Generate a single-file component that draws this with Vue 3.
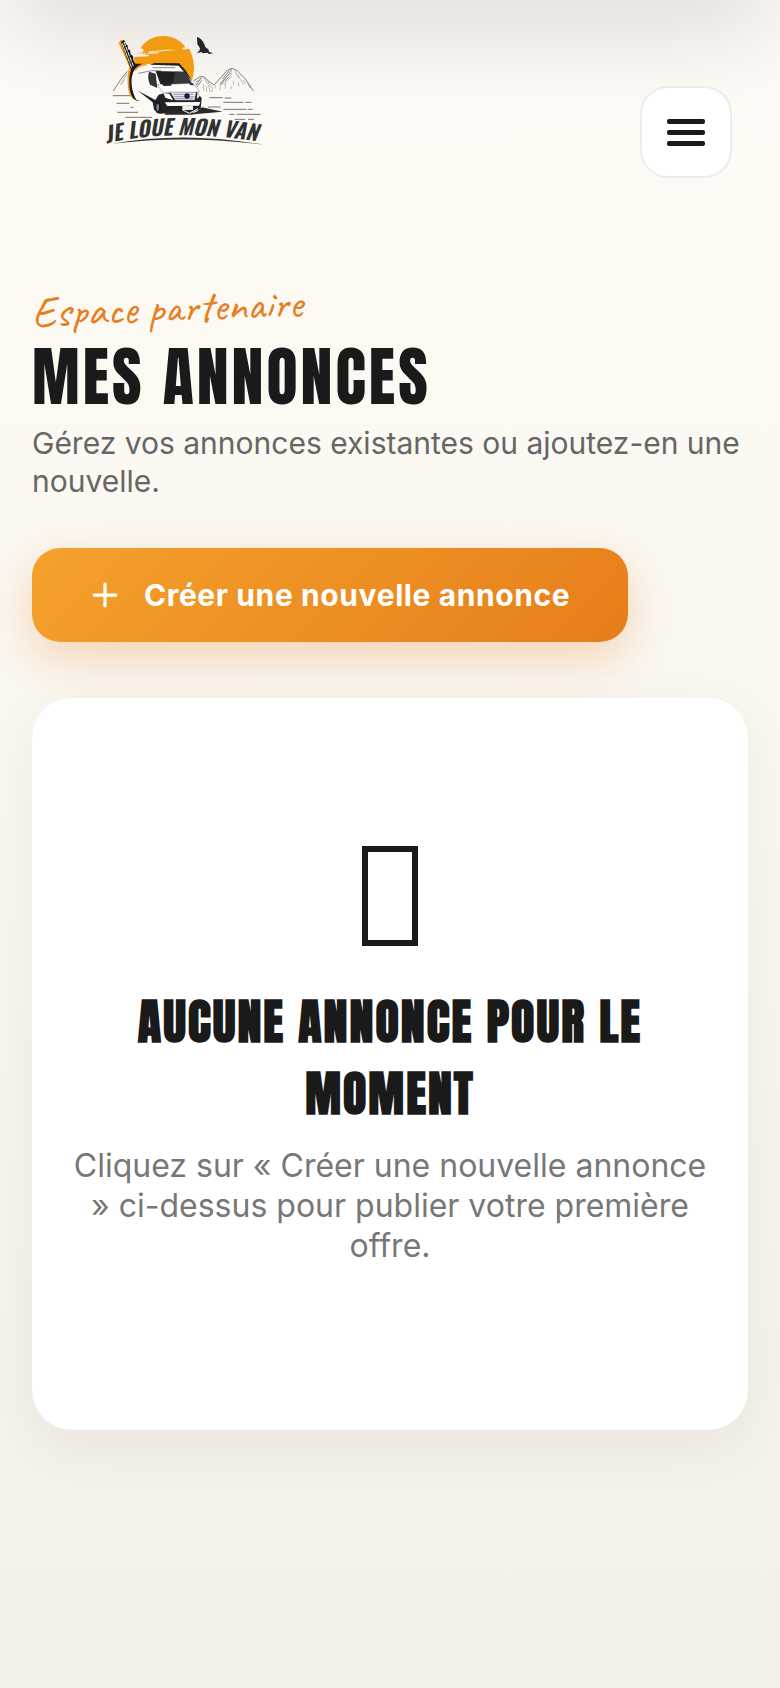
<script setup>
import { ref } from 'vue'

const menuOpen = ref(false)
const annonces = ref([])
</script>

<template>
  <div class="page">
    <header class="site-header">
      <a href="#" class="logo" aria-label="Je loue mon van">
        <svg viewBox="0 0 570 420" class="logo-svg">
          <!-- soleil -->
          <path fill="#f39c12" d="M152 85C164 62 190 48 220 48c28 0 52 12 66 34l-10 3 4 5c-30 0-50-3-78 2l-22 2-12 9-3-8-6 6 1-14z" />
          <path fill="#f39c12" d="M170 98c40-6 80-6 128-12 10 22 15 42 14 60-1 17-4 31-9 43l-28-52-80-5-60 1-4-22 44-2 2-4-38-5 46 1 22-1-2-3-66-2z" />
          <!-- oiseau -->
          <path fill="#222727" d="M321 51c12 3 20 14 25 30l10 8 1 6 12 5-12 2-5-4-14 2-3-4-15 4 8-8 2-7-8-13z" />
          <!-- montagnes -->
          <g fill="none" stroke="#444" stroke-width="2">
            <path d="M70 213l22-34 20-25M310 183l22-14 10 2 16 14 14 10 40-44 14-6 14 6 26 26 24 36" />
            <path d="M424 147l-8 16-12 12-14 20M424 149l-2 22-9 10-12 14M336 170l-8 10-14 8M342 172l6 14 8 8 4 22M352 182l16 24M436 152l4 14 12 12 8 16M110 160l-10 22-8 10M102 178l-10 18" stroke-width="1" />
            <path d="M417 153l-20 24M420 160l-28 30M418 170l-28 26M334 174l-16 20M336 180l-14 20M324 190l-8 10" stroke-width="3" opacity=".6" />
            <path d="M378 195l-4 10M392 198l-3 12M407 192l-2 14M430 182l1 14M444 186l3 14M460 180l5 12M424 198l-2 10M474 192l6 12M340 192l1 20M350 200l-1 15M367 208l-4 8M444 163l4 10" stroke-width="1" />
          </g>
          <!-- lignes du sol -->
          <g stroke="#333" stroke-width="2">
            <path d="M68 227h54M80 250h38M122 262h8M82 277h62M358 233h40M404 234h20M400 247h60M466 247h18M354 261h38M400 268h70M474 268h14M418 283h16M440 283h72M106 292h80M434 298h32M474 298h18" />
          </g>
          <!-- guitare -->
          <path fill="#f39c12" d="M86 69l7-10 8 2 23 88-4 24c-4 31 4 53 21 68-19-3-27-22-28-50-1-20 0-36 5-50z" />
          <path fill="#1b1b1b" d="M93 66l9-7 6 14 5 3 1 11 6 4 2 12 7 5 1 12 6 11 22 0-16 11c-22 13-23 63-3 97l11 4c-22 1-31-20-32-51-1-19 2-34 5-43z" />
          <path d="M97 70l28 73M102 66l28 72" stroke="#eee" stroke-width="3" stroke-dasharray="14 2" />
          <path d="M135 151c8-12 18-17 34-17" fill="none" stroke="#f39c12" stroke-width="5" />
          <!-- van -->
          <path fill="#fbfaf7" d="M140 160c8-15 22-23 44-25l82-3 40 49 16 20 12 24-2 40-124 17-66-69c-5-15-8-35-2-53z" />
          <path fill="#222" d="M180 134l14-5 74 1 20 23 20 33-42-49z" />
          <path d="M145 160l40-8 28 0M188 143h68" stroke="#555" stroke-width="2" fill="none" />
          <path fill="#333" d="M177 155l20 6 5 43-22-10c-6-14-7-26-3-39z" />
          <path fill="#202020" d="M197 153l86 2c9 10 17 23 23 36l-95 1z" />
          <path fill="#494949" d="M256 154l27 1 23 36-58 1z" opacity=".6" />
          <path fill="#fff" stroke="#333" stroke-width="1" d="M202 194l108-4 18 24-14 4-94 0z" />
          <path fill="#20204d" d="M216 192l30-1-3 6-22 1zM298 190l10 0 4 6-12-1z" />
          <path fill="#222" d="M144 212l52 28 10-16 18-5 98-2 13 18-3 32-24 9-100 5-16-12-4-22z" />
          <path fill="#e9e9ef" stroke="#242450" stroke-width="1" d="M240 216l79 1-5 24-58 0z" />
          <path d="M250 223h60M253 230h60M256 236h54" stroke="#6c6c8b" stroke-width="2" />
          <circle cx="291" cy="228" r="8" fill="#17174d" />
          <path fill="#fff" d="M220 219l18 2 12 20-24-8zM322 219l8 8-9 10zM225 247l106-1-4 11-96 1z" />
          <path fill="#eee" d="M277 258h32v12h-32z" />
          <ellipse cx="204" cy="261" rx="9" ry="19" fill="#1b1b1b" />
          <ellipse cx="203" cy="262" rx="4" ry="11" fill="#7c7c9c" />
          <!-- ombre -->
          <path fill="#292929" d="M232 272l84-3-10 11 14-5 16-13 62 13-78 7-16 2-80 0z" />
          <path fill="none" stroke="#fff" stroke-width="3" d="M278 270l20 10 26-14" />
          <!-- nom -->
          <path id="logo-arc" fill="none" d="M50 370Q270 320 560 374" />
          <text class="logo-name"><textPath href="#logo-arc">JE LOUE MON VAN</textPath></text>
          <path fill="#303333" d="M68 371Q280 332 520 374Q285 344 68 371z" />
        </svg>
      </a>
      <button
        type="button"
        class="menu-toggle"
        aria-label="Menu"
        :aria-expanded="menuOpen"
        @click="menuOpen = !menuOpen"
      >
        <span class="bar"></span>
        <span class="bar"></span>
        <span class="bar"></span>
      </button>
    </header>

    <main class="content">
      <p class="eyebrow">Espace partenaire</p>
      <h1 class="title">Mes annonces</h1>
      <p class="lead">Gérez vos annonces existantes ou ajoutez-en une nouvelle.</p>

      <button type="button" class="btn-create">
        <svg class="plus" viewBox="0 0 24 24">
          <path d="M12 2v20M2 12h20" />
        </svg>
        Créer une nouvelle annonce
      </button>

      <section v-if="!annonces.length" class="empty-card">
        <span class="empty-icon"></span>
        <h2 class="empty-title">Aucune annonce pour le moment</h2>
        <p class="empty-text">
          Cliquez sur « Créer une nouvelle annonce » ci-dessus pour publier votre première offre.
        </p>
      </section>
    </main>
  </div>
</template>

<style>
body {
  margin: 0;
}
</style>

<style scoped>
.page {
  position: relative;
  box-sizing: border-box;
  min-height: 100vh;
  overflow: hidden;
  background: linear-gradient(180deg, #fefaf5 0%, #faf7f0 50%, #f4efe9 100%);
  color: #1a1a1a;
  font-family: Inter, "Liberation Sans", sans-serif;
}

/* shadow falling from the top edge */
.page::before {
  content: "";
  position: absolute;
  top: -80px;
  left: 0;
  right: 0;
  height: 80px;
  border-radius: 40px;
  box-shadow: 0 20px 100px rgba(0, 0, 0, 0.16);
}

.site-header {
  position: relative;
  display: flex;
  justify-content: space-between;
  align-items: flex-start;
  padding: 20px 48px 0 90px;
  margin-bottom: 108px;
}

.logo-svg {
  display: block;
  width: 190px;
  height: 140px;
}

.logo-name {
  fill: #303333;
  font-family: Oswald, Anton, "Liberation Sans", sans-serif;
  font-size: 64px;
  font-weight: 700;
  font-style: italic;
}

.menu-toggle {
  display: flex;
  flex-direction: column;
  align-items: center;
  justify-content: center;
  gap: 6px;
  width: 92px;
  height: 92px;
  margin: 66px 0 0;
  padding: 0;
  border: 2px solid #ececec;
  border-radius: 28px;
  background: #fff;
  cursor: pointer;
}

.bar {
  width: 38px;
  height: 5px;
  border-radius: 2px;
  background: #1a1a1a;
}

.content {
  position: relative;
  padding: 0 32px 96px;
}

.eyebrow {
  width: fit-content;
  margin: 0 0 12px;
  color: #e67e22;
  font-family: Caveat, cursive;
  font-size: 44px;
  font-weight: 400;
  line-height: 44px;
  transform: rotate(-2deg);
}

.title {
  margin: 0 0 12px;
  font-family: Anton, Impact, sans-serif;
  font-size: 64px;
  font-weight: 400;
  line-height: 70px;
  letter-spacing: 3px;
  text-transform: uppercase;
}

.lead {
  margin: 0 0 48px;
  color: #666;
  font-size: 30px;
  line-height: 38px;
}

.btn-create {
  display: flex;
  align-items: center;
  gap: 26px;
  padding: 28px 58px 28px 60px;
  border: none;
  border-radius: 28px;
  background: linear-gradient(135deg, #f5a12c 0%, #e67e1a 100%);
  box-shadow: 0 16px 48px rgba(230, 126, 34, 0.3);
  color: #fff;
  font-family: inherit;
  font-size: 30px;
  font-weight: 700;
  line-height: 38px;
  letter-spacing: 0.02em;
  cursor: pointer;
}

.plus {
  width: 26px;
  height: 26px;
  fill: none;
  stroke: #fff;
  stroke-width: 3;
  stroke-linecap: round;
}

.empty-card {
  display: flex;
  flex-direction: column;
  align-items: center;
  margin-top: 56px;
  padding: 148px 40px 164px;
  border-radius: 40px;
  background: #fff;
  box-shadow: 0 16px 60px rgba(0, 0, 0, 0.06);
  text-align: center;
}

.empty-icon {
  box-sizing: border-box;
  width: 56px;
  height: 100px;
  border: 6px solid #1a1a1a;
}

.empty-title {
  margin: 40px 0 16px;
  font-family: Anton, Impact, sans-serif;
  font-size: 48px;
  font-weight: 700;
  line-height: 72px;
  letter-spacing: 2px;
  text-transform: uppercase;
}

.empty-text {
  margin: 0;
  color: #777;
  font-size: 32px;
  line-height: 40px;
}
</style>
